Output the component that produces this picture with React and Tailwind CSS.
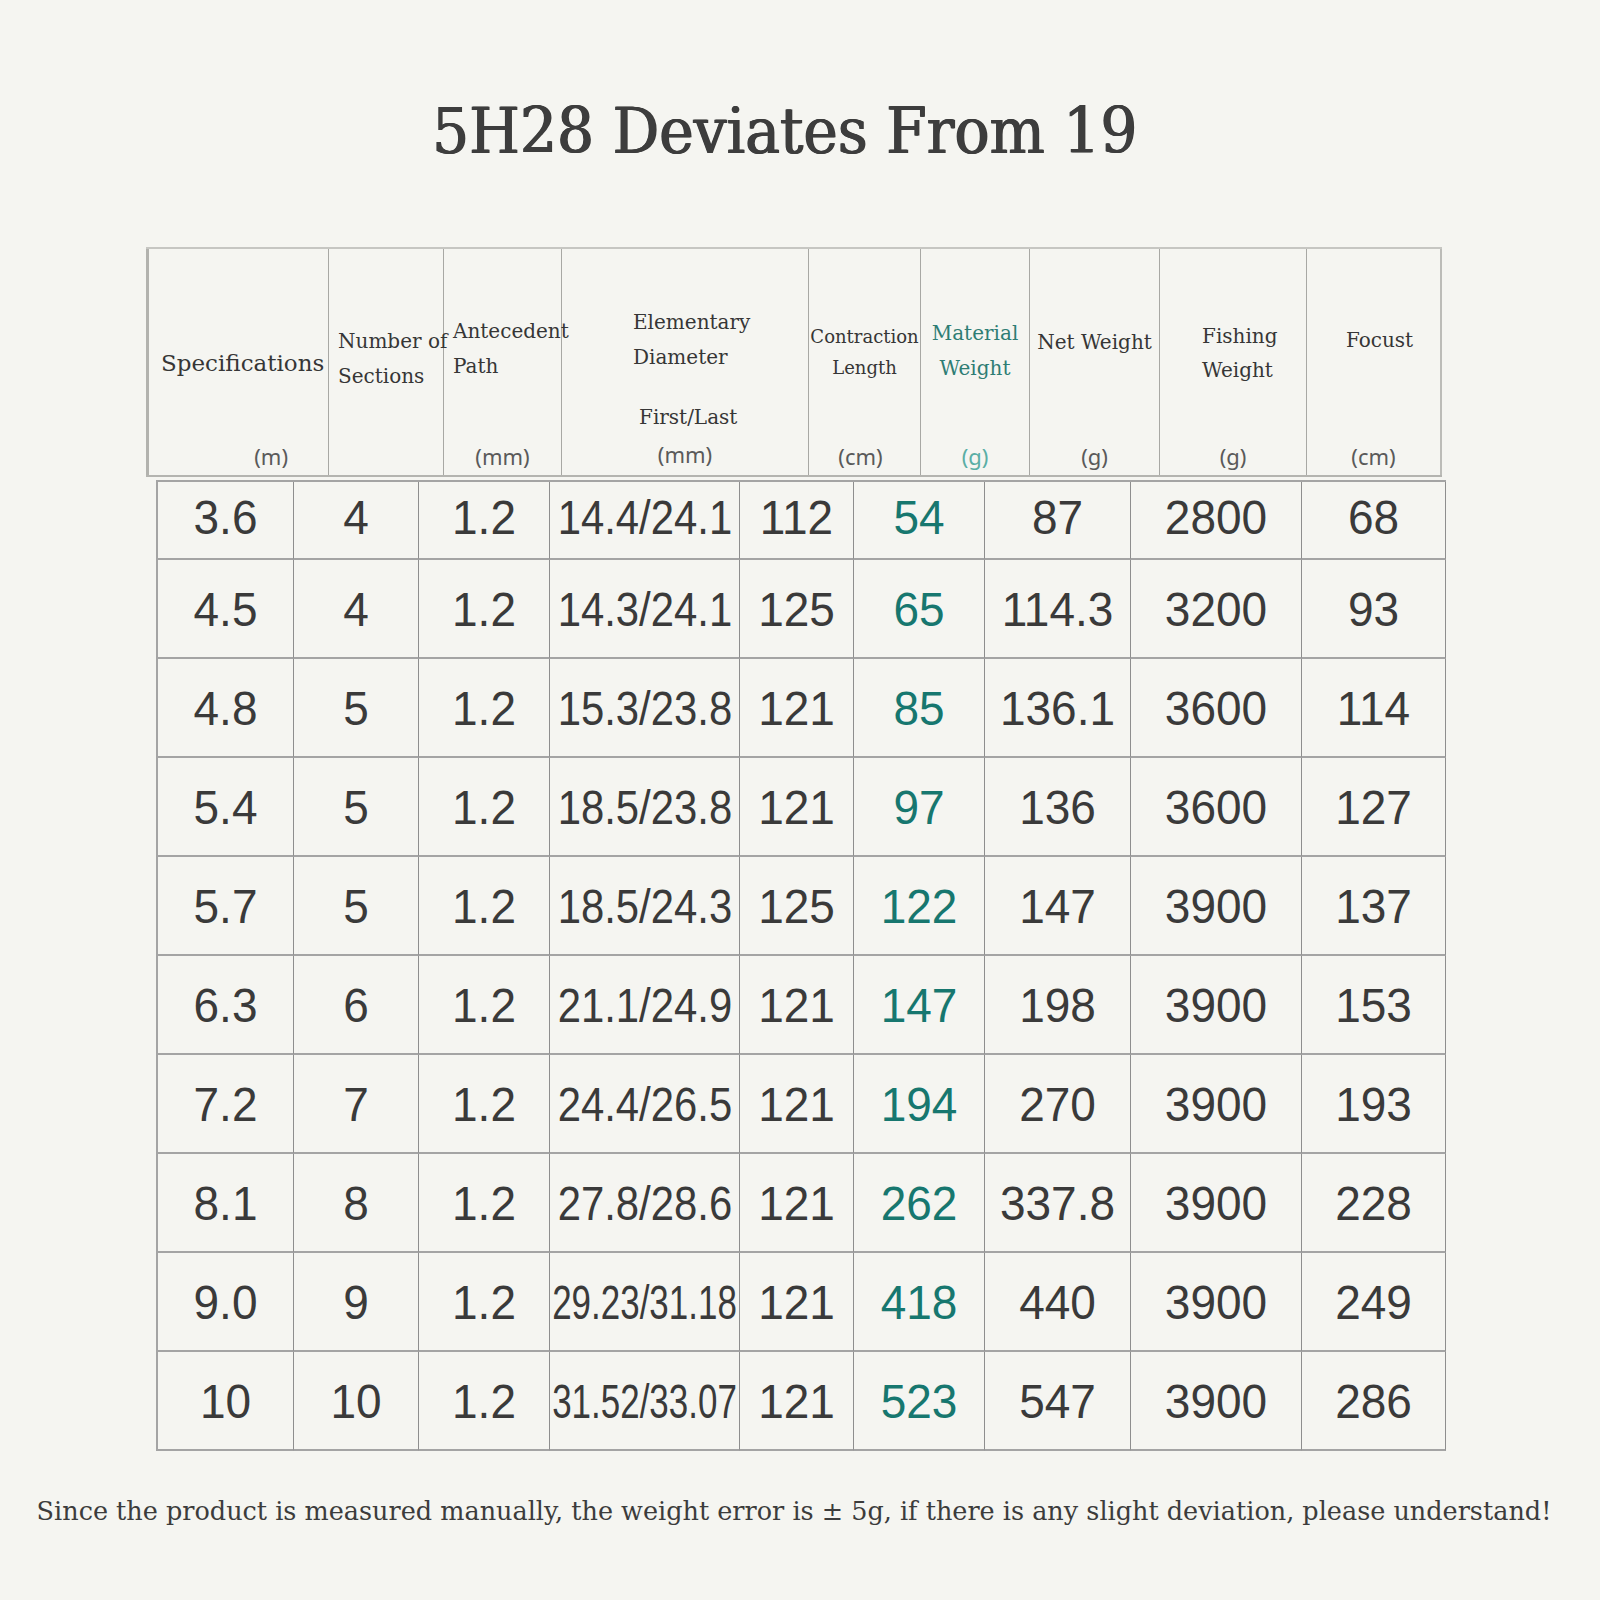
import React from "react";

const rows = [
  ["3.6", "4", "1.2", "14.4/24.1", "112", "54", "87", "2800", "68"],
  ["4.5", "4", "1.2", "14.3/24.1", "125", "65", "114.3", "3200", "93"],
  ["4.8", "5", "1.2", "15.3/23.8", "121", "85", "136.1", "3600", "114"],
  ["5.4", "5", "1.2", "18.5/23.8", "121", "97", "136", "3600", "127"],
  ["5.7", "5", "1.2", "18.5/24.3", "125", "122", "147", "3900", "137"],
  ["6.3", "6", "1.2", "21.1/24.9", "121", "147", "198", "3900", "153"],
  ["7.2", "7", "1.2", "24.4/26.5", "121", "194", "270", "3900", "193"],
  ["8.1", "8", "1.2", "27.8/28.6", "121", "262", "337.8", "3900", "228"],
  ["9.0", "9", "1.2", "29.23/31.18", "121", "418", "440", "3900", "249"],
  ["10", "10", "1.2", "31.52/33.07", "121", "523", "547", "3900", "286"],
];

const serif = "font-['DejaVu_Serif',serif]";
const unit = "font-['Noto_Sans',sans-serif] text-[22px] leading-[30px] text-[#5a5a5a]";

const HeaderRow = () => {
  return (
    <div className={`ml-[146px] mt-[84px] flex h-[230px] w-[1296px] border-y-2 border-t-[#c6c6c2] border-b-[#b4b4b0] text-[20px] text-[#363636] ${serif}`}>
      <div className="flex w-[183px] flex-col border-r border-l-[3px] border-r-[#a8a8a4] border-l-[#b2b2ae] pl-[12px]">
        <div className="mt-[99px] whitespace-nowrap text-[23px] leading-[30px]">Specifications</div>
        <div className={`mt-auto self-end pb-[4px] pr-[40px] ${unit}`}>(m)</div>
      </div>
      <div className="flex w-[115px] flex-col border-r border-[#a8a8a4] pl-[9px] leading-[35px]">
        <div className="mt-[75px] whitespace-nowrap">Number of</div>
        <div>Sections</div>
      </div>
      <div className="flex w-[118px] flex-col border-r border-[#a8a8a4] leading-[35px]">
        <div className="mt-[65px] whitespace-nowrap pl-[9px]">Antecedent</div>
        <div className="pl-[9px]">Path</div>
        <div className={`mt-auto pb-[4px] text-center ${unit}`}>(mm)</div>
      </div>
      <div className="flex w-[247px] flex-col border-r border-[#a8a8a4] leading-[35px]">
        <div className="mt-[56px] pl-[71px]">Elementary</div>
        <div className="pl-[71px]">Diameter</div>
        <div className="mt-[25px] pl-[77px]">First/Last</div>
        <div className={`mt-auto pb-[6px] text-center ${unit}`}>(mm)</div>
      </div>
      <div className="flex w-[112px] flex-col items-center border-r border-[#a8a8a4] text-[18px] leading-[31px]">
        <div className="mt-[72px] whitespace-nowrap">Contraction</div>
        <div>Length</div>
        <div className={`mt-auto pb-[4px] pr-[8px] ${unit}`}>(cm)</div>
      </div>
      <div className="flex w-[109px] flex-col items-center border-r border-[#a8a8a4] leading-[35px] text-[#2e7d74]">
        <div className="mt-[67px]">Material</div>
        <div>Weight</div>
        <div className="mt-auto pb-[4px] font-['Noto_Sans',sans-serif] text-[22px] leading-[30px] text-[#5aaea5]">(g)</div>
      </div>
      <div className="flex w-[130px] flex-col items-center border-r border-[#a8a8a4] leading-[35px]">
        <div className="mt-[76px] whitespace-nowrap">Net Weight</div>
        <div className={`mt-auto pb-[4px] ${unit}`}>(g)</div>
      </div>
      <div className="flex w-[147px] flex-col border-r border-[#a8a8a4] leading-[34px]">
        <div className="mt-[70px] pl-[42px]">Fishing</div>
        <div className="pl-[42px]">Weight</div>
        <div className={`mt-auto pb-[4px] text-center ${unit}`}>(g)</div>
      </div>
      <div className="flex w-[135px] flex-col items-center border-r-2 border-[#bcbcb8] leading-[35px]">
        <div className="mt-[74px] pl-[12px]">Focust</div>
        <div className={`mt-auto pb-[4px] ${unit}`}>(cm)</div>
      </div>
    </div>
  );
};

const Cell = ({ value, col, row }) => {
  const teal = col === 5;
  let scale = "scale-y-[1.05]";
  if (col === 3) scale = row >= 8 ? "scale-x-[0.76] scale-y-[1.05]" : "scale-x-[0.91] scale-y-[1.05]";
  return (
    <div
      className={`flex items-center justify-center border-r border-b-2 border-r-[#8e8e8e] border-b-[#a4a4a4] ${
        row === 0 ? "h-[78px] pb-[6px]" : "h-[99px]"
      } ${teal ? "text-[#17776f]" : "text-[#3a3a3a]"}`}
    >
      <span className={`inline-block whitespace-nowrap ${scale}`}>{value}</span>
    </div>
  );
};

const App = () => {
  return (
    <div className="min-h-[1600px] w-[1600px] bg-[#f5f5f1]">
      <div className="flex justify-center pr-[30px] pt-[99px]">
        <h1 className={`inline-block scale-x-[0.91] whitespace-nowrap text-[64px] leading-none text-[#3d3d3d] [text-shadow:1px_0_0_#3d3d3d,-0.5px_0_0_#3d3d3d] ${serif}`}>
          5H28 Deviates From 19
        </h1>
      </div>
      <HeaderRow />
      <div className="ml-[156px] mt-[3px] grid w-[1290px] grid-cols-[136px_125px_131px_190px_114px_131px_146px_171px_144px] border-l-2 border-t-2 border-[#a4a4a4] font-['Liberation_Sans',Arial,sans-serif] text-[46px] leading-none">
        {rows.map((r, ri) =>
          r.map((v, ci) => <Cell key={`${ri}-${ci}`} value={v} col={ci} row={ri} />)
        )}
      </div>
      <div className="mt-[45px] flex justify-center pr-[12px]">
        <p className={`whitespace-nowrap text-[25.5px] leading-[30px] text-[#3c3c3c] ${serif}`}>
          Since the product is measured manually, the weight error is ± 5g, if there is any slight deviation, please understand!
        </p>
      </div>
    </div>
  );
};

export default App;
